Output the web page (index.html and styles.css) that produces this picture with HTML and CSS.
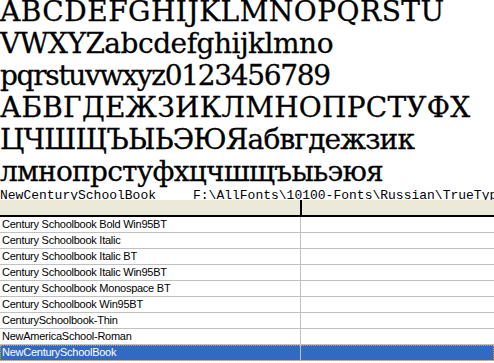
FILE: index.html
```html
<!DOCTYPE html>
<html>
<head>
<meta charset="utf-8">
<link rel="stylesheet" href="styles.css">
</head>
<body>
<div class="sample">
  <div class="line caps">ABCDEFGHIJKLMNOPQRSTU</div>
  <div class="line mixed">VWXYZabcdefghijklmno</div>
  <div class="line lower">pqrstuvwxyz0123456789</div>
  <div class="line cyr-caps">АБВГДЕЖЗИКЛМНОПРСТУФХ</div>
  <div class="line cyr-mixed">ЦЧШЩЪЫЬЭЮЯабвгдежзик</div>
  <div class="line cyr-lower">лмнопрстуфхцчшщъыьэюя</div>
</div>
<div class="info"><span class="name">NewCenturySchoolBook</span><span class="path">F:\AllFonts\10100-Fonts\Russian\TrueType\NCSB.TTF</span></div>
<div class="list">
  <div class="head"><div class="c1"></div><div class="c2"></div></div>
  <div class="row"><div class="c1">Century Schoolbook Bold Win95BT</div><div class="c2"></div></div>
  <div class="row"><div class="c1">Century Schoolbook Italic</div><div class="c2"></div></div>
  <div class="row"><div class="c1">Century Schoolbook Italic BT</div><div class="c2"></div></div>
  <div class="row"><div class="c1">Century Schoolbook Italic Win95BT</div><div class="c2"></div></div>
  <div class="row"><div class="c1">Century Schoolbook Monospace BT</div><div class="c2"></div></div>
  <div class="row"><div class="c1">Century Schoolbook Win95BT</div><div class="c2"></div></div>
  <div class="row"><div class="c1">CenturySchoolbook-Thin</div><div class="c2"></div></div>
  <div class="row"><div class="c1">NewAmericaSchool-Roman</div><div class="c2"></div></div>
  <div class="row selected"><div class="c1">NewCenturySchoolBook</div><div class="c2"></div></div>
</div>
</body>
</html>
```

FILE: styles.css
```css
html, body {
  margin: 0;
  padding: 0;
  background: #ffffff;
  width: 494px;
  height: 363px;
  overflow: hidden;
}
.sample {
  font-family: "DejaVu Serif", serif;
  font-size: 28px;
  line-height: 32px;
  color: #000;
  margin-top: -4px;
  white-space: nowrap;
  -webkit-text-stroke: 0.3px #000;
}
.caps { letter-spacing: 0.5px; }
.mixed { letter-spacing: -0.5px; }
.lower { letter-spacing: -1.3px; }
.cyr-caps { letter-spacing: 0.25px; }
.cyr-mixed { letter-spacing: -0.85px; }
.cyr-lower { letter-spacing: -0.75px; }
.info {
  font-family: "Liberation Mono", monospace;
  font-size: 13px;
  line-height: 15px;
  height: 12px;
  overflow: hidden;
  white-space: nowrap;
  display: flex;
  color: #000;
}
.info .name {
  width: 193px;
  flex: none;
}
.list {
  font-family: "Liberation Sans", sans-serif;
  font-size: 11px;
  letter-spacing: -0.25px;
  color: #000;
}
.head {
  display: flex;
  height: 15px;
  background: #ece9d8;
  border-bottom: 2px solid #000;
}
.head .c1 {
  width: 300px;
  border-right: 2px solid #000;
  flex: none;
}
.row {
  display: flex;
  height: 15px;
  line-height: 15px;
  border-bottom: 1px solid #c0c0c0;
}
.row .c1 {
  width: 298px;
  padding-left: 2px;
  border-right: 1px solid #c0c0c0;
  flex: none;
  white-space: nowrap;
  overflow: hidden;
}
.row .c2 {
  flex: 1;
}
.row.selected {
  background: #316ac5;
  color: #fff;
  outline: 1px dotted #c8a060;
  outline-offset: -1px;
}
```
